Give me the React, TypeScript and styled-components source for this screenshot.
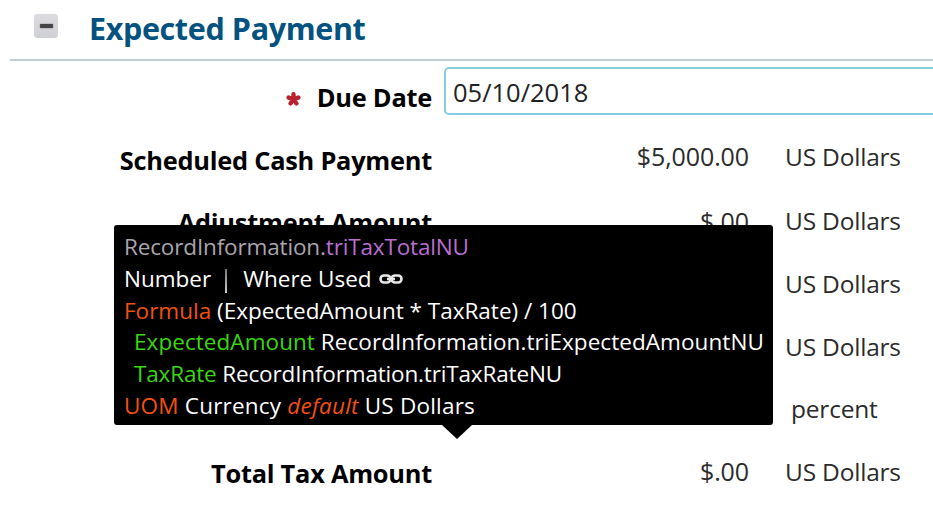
import React from "react";
import styled, { createGlobalStyle } from "styled-components";

const Global = createGlobalStyle`
  html, body { margin: 0; padding: 0; background: #fff; overflow: hidden; }
  body { font-family: "Open Sans", "Noto Sans", sans-serif; color: #222; }
`;

const Page = styled.div`
  position: relative;
  width: 933px;
  height: 521px;
  overflow: hidden;
`;

const Header = styled.div`
  display: flex;
  align-items: center;
  height: 59px;
  margin-left: 10px;
  padding-left: 24px;
  border-bottom: 2px solid #bfcfd9;
  box-sizing: content-box;
`;

const Toggle = styled.div`
  width: 24px;
  height: 24px;
  border-radius: 4px;
  background: linear-gradient(#dcdce0, #cfd0d5);
  box-shadow: 0 0 1px #cfd0d5;
  display: flex;
  align-items: center;
  justify-content: center;
  margin-top: -7px;
  &::before {
    content: "";
    width: 13px;
    height: 4px;
    border-radius: 1px;
    background: #444;
    box-shadow: 0 0 1.5px #555;
  }
`;

const Title = styled.h2`
  margin: 0 0 0 31px;
  font-size: 30.5px;
  font-weight: 700;
  letter-spacing: -0.37px;
  color: #04527f;
  position: relative;
  top: -2px;
`;

const Rows = styled.div`
  display: flex;
  flex-direction: column;
  padding-top: 3px;
`;

const Row = styled.div<{ $lift?: boolean }>`
  display: flex;
  align-items: center;
  height: 62.7px;
  flex: none;
  --lift: ${(p) => (p.$lift ? "4px" : "0px")};
`;

const Label = styled.div`
  width: 432px;
  flex: none;
  display: flex;
  justify-content: flex-end;
  align-items: center;
  padding-top: 3px;
  font-size: 25.4px;
  font-weight: 700;
  letter-spacing: -0.25px;
  color: #000;
  white-space: nowrap;
`;

const Required = styled.span`
  color: #b8232f;
  margin-right: 16px;
  margin-top: 4px;
  display: flex;
`;

const DateInput = styled.div`
  margin-left: 12px;
  margin-top: -8px;
  width: 560px;
  height: 48px;
  flex: none;
  box-sizing: border-box;
  border: 2px solid #86cde0;
  border-radius: 5px;
  padding: 2px 0 0 7px;
  display: flex;
  align-items: center;
  font-size: 25.5px;
  color: #222;
`;

const Value = styled.div`
  width: 317px;
  flex: none;
  margin-bottom: var(--lift);
  text-align: right;
  font-size: 25px;
  letter-spacing: -0.1px;
  color: #2b2b2b;
`;

const Unit = styled.div<{ $indent?: number }>`
  margin-left: ${(p) => 36 + (p.$indent ?? 0)}px;
  margin-bottom: var(--lift);
  font-size: 24.5px;
  letter-spacing: -0.2px;
  color: #2b2b2b;
  white-space: nowrap;
`;

const Tooltip = styled.div`
  position: absolute;
  left: 114px;
  top: 225px;
  width: 659px;
  height: 200px;
  box-sizing: border-box;
  padding: 6px 10px;
  background: #000;
  border-radius: 3px;
  color: #fff;
  font-size: 22.5px;
  line-height: 31.8px;
  white-space: nowrap;
  &::after {
    content: "";
    position: absolute;
    left: 328px;
    bottom: -14px;
    border-left: 15px solid transparent;
    border-right: 15px solid transparent;
    border-top: 14px solid #000;
  }
`;

const Line = styled.div<{ $indent?: boolean; $tracking?: number }>`
  padding-left: ${(p) => (p.$indent ? 10 : 0)}px;
  letter-spacing: ${(p) => p.$tracking ?? 0}px;
  display: flex;
  align-items: center;
  white-space: pre;
`;

const Muted = styled.span`color: #aaa6ad;`;
const Purple = styled.span`color: #b96fd0;`;
const Orange = styled.span`color: #f4500f;`;
const OrangeItalic = styled.em`color: #f4500f;`;
const Green = styled.span`color: #3ad60f;`;
const Divider = styled.span`
  width: 2px;
  height: 24px;
  margin: 5px 16px 0 14px;
  background: linear-gradient(#777, #ccc);
`;
const LinkIcon = styled.svg`
  margin-left: 7px;
  margin-top: 1px;
`;

const Star = () => (
  <svg width="15" height="14" viewBox="0 0 15 14" fill="none" stroke="currentColor" strokeWidth="4.4" strokeLinecap="round">
    <path d="M7.500 7V2.300M7.500 7L2.600 5.600M7.500 7L12.400 5.600M7.500 7L4.600 11.400M7.500 7L10.400 11.400" />
  </svg>
);

const Chain = () => (
  <LinkIcon width="24" height="10" viewBox="0 0 24 10" fill="none" stroke="#e8e8e8" strokeWidth="2.6">
    <rect x="1.500" y="1.500" width="10" height="7" rx="3.500" />
    <rect x="12.500" y="1.500" width="10" height="7" rx="3.500" />
    <path d="M8 5h8" />
  </LinkIcon>
);

export default function App() {
  return (
    <Page>
      <Global />
      <Header>
        <Toggle />
        <Title>Expected Payment</Title>
      </Header>
      <Rows>
        <Row>
          <Label>
            <Required><Star /></Required>
            Due Date
          </Label>
          <DateInput>05/10/2018</DateInput>
        </Row>
        <Row $lift>
          <Label>Scheduled Cash Payment</Label>
          <Value>$5,000.00</Value>
          <Unit>US Dollars</Unit>
        </Row>
        <Row>
          <Label>Adjustment Amount</Label>
          <Value>$.00</Value>
          <Unit>US Dollars</Unit>
        </Row>
        <Row>
          <Label />
          <Value />
          <Unit>US Dollars</Unit>
        </Row>
        <Row>
          <Label />
          <Value />
          <Unit>US Dollars</Unit>
        </Row>
        <Row>
          <Label />
          <Value />
          <Unit $indent={6}>percent</Unit>
        </Row>
        <Row>
          <Label>Total Tax Amount</Label>
          <Value>$.00</Value>
          <Unit>US Dollars</Unit>
        </Row>
      </Rows>
      <Tooltip>
        <Line $tracking={-0.15}><Muted>RecordInformation.</Muted><Purple>triTaxTotalNU</Purple></Line>
        <Line>Number<Divider />Where Used<Chain /></Line>
        <Line><Orange>Formula</Orange> (ExpectedAmount * TaxRate) / 100</Line>
        <Line $indent $tracking={0.06}><Green>ExpectedAmount</Green> RecordInformation.triExpectedAmountNU</Line>
        <Line $indent $tracking={-0.16}><Green>TaxRate</Green> RecordInformation.triTaxRateNU</Line>
        <Line $tracking={0.2}><Orange>UOM</Orange> Currency <OrangeItalic>default</OrangeItalic> US Dollars</Line>
      </Tooltip>
    </Page>
  );
}
